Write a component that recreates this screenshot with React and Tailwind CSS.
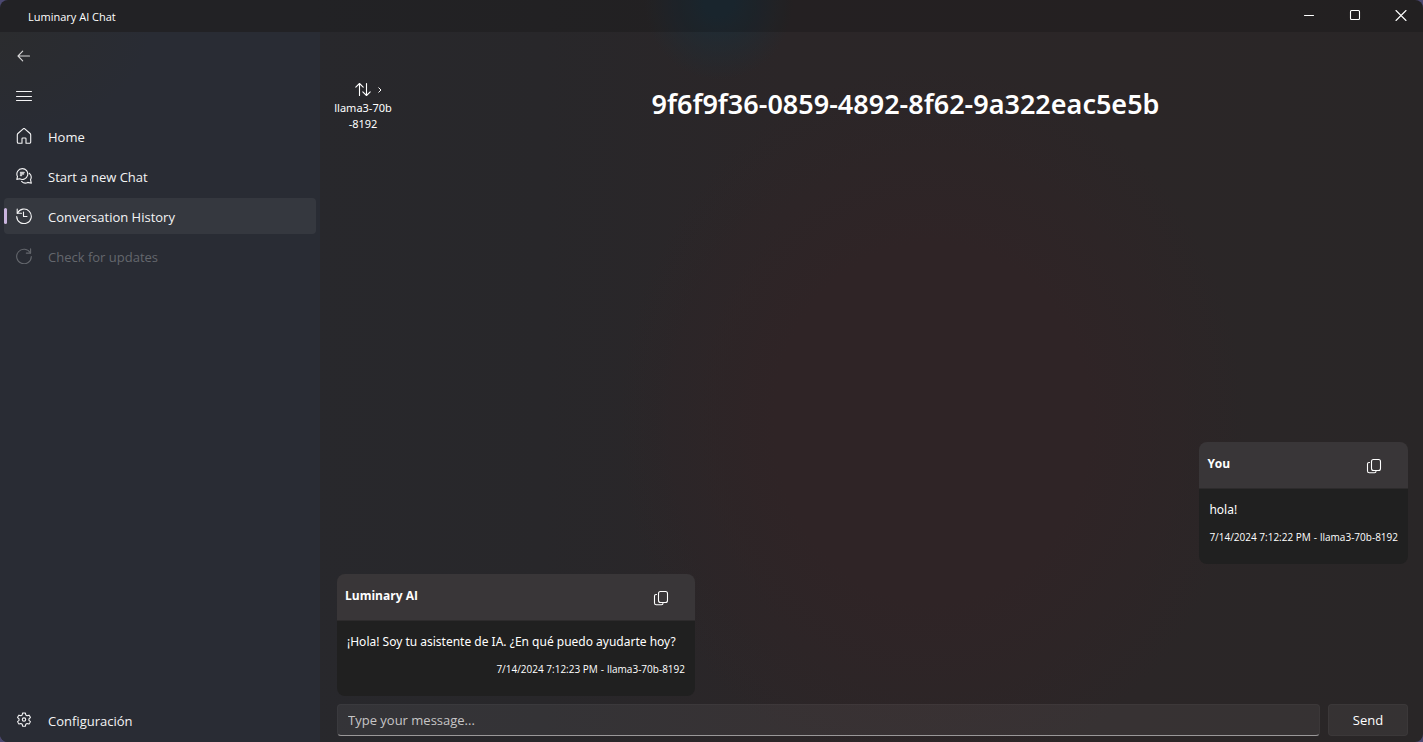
import React from "react";

function Icon({ children, className = "size-4" }) {
  return (
    <svg
      viewBox="0 0 16 16"
      className={`${className} shrink-0`}
      fill="none"
      stroke="currentColor"
      strokeWidth="1.1"
      strokeLinecap="round"
      strokeLinejoin="round"
      aria-hidden="true"
    >
      {children}
    </svg>
  );
}

const icons = {
  back: <path d="M13.5 8H2.2M6.7 3.2 2 8l4.7 4.8" opacity=".85" />,
  menu: <path d="M.5 3.5h15M.5 8.5h15M.5 12.5h15" strokeWidth="1" />,
  home: <path d="M6 15.2H2.6a1.3 1.3 0 0 1-1.3-1.3V7c0-.6.2-1.1.6-1.5L7.2.8a1.2 1.2 0 0 1 1.6 0l5.3 4.7c.4.4.6.9.6 1.5v6.9a1.3 1.3 0 0 1-1.3 1.3H10v-4.4a.8.8 0 0 0-.8-.8H6.8a.8.8 0 0 0-.8.8z" />,
  chat: (
    <>
      <path d="M6.3.6a5.4 5.4 0 1 1-2.6 10.1L.8 11.4l.7-2.9A5.4 5.4 0 0 1 6.3.6z" />
      <path d="M13.2 5.3a5.1 5.1 0 0 1 1.3 6.4l.8 3.5-3.5-.8a5.2 5.2 0 0 1-6.2-1.1" />
      <path d="M4.5 4.5h3.6M4.5 6h3M4.5 7.5h1" strokeWidth="1.5" opacity=".8" />
    </>
  ),
  history: (
    <>
      <path d="M1.2 1v4.3h4.3" />
      <path d="M1.4 5.2A7.3 7.3 0 1 1 .7 8.5" />
      <path d="M7.5 4v4.5H11" />
    </>
  ),
  refresh: (
    <>
      <path d="M14.6.8v4.3h-4.3" />
      <path d="M14.4 5A7.3 7.3 0 1 0 15.3 8.5" />
    </>
  ),
  settings: (
    <>
      <path d="M6.6 1.1a7.3 7.3 0 0 1 2.8 0l.4 1.9 1.3.75 1.9-.6a7.3 7.3 0 0 1 1.4 2.4l-1.45 1.3v1.5l1.45 1.3a7.3 7.3 0 0 1-1.4 2.4l-1.9-.6-1.3.75-.4 1.9a7.3 7.3 0 0 1-2.8 0l-.4-1.9-1.3-.75-1.9.6a7.3 7.3 0 0 1-1.4-2.4l1.45-1.3v-1.5L1.6 5.55A7.3 7.3 0 0 1 3 3.15l1.9.6L6.2 3z" />
      <circle cx="8" cy="7.6" r="1.7" />
    </>
  ),
  swap: <path d="M4.5 13.5v-12M.8 5.2l3.7-3.7 3.7 3.7M11.5 1.5v12M7.8 9.8l3.7 3.7 3.7-3.7" />,
  copy: (
    <>
      <rect x="5.5" y="1.5" width="9" height="11" rx="2" />
      <path d="M3.5 4.5H3A1.5 1.5 0 0 0 1.5 6v7a1.8 1.8 0 0 0 1.8 1.8h5.2a1.5 1.5 0 0 0 1.5-1.5" />
    </>
  ),
};

function NavItem({ icon, label, text, selected = false, disabled = false }) {
  return (
    <button
      type="button"
      aria-label={label}
      aria-current={selected ? "page" : undefined}
      disabled={disabled}
      className={`relative flex h-9 items-center gap-4 rounded px-3 text-left text-[13px] leading-5 ${
        selected ? "bg-white/6" : ""
      } ${disabled ? "text-[#64676d]" : "text-[#f4f4f5]"} ${text ? "w-full" : "w-10"}`}
    >
      {selected && <span className="absolute left-0 h-4 w-[3px] rounded-full bg-[#c9b4dd]" />}
      <Icon>{icons[icon]}</Icon>
      {text && <span className="pt-0.5">{text}</span>}
    </button>
  );
}

function Message({ author, body, date, model, own = false }) {
  return (
    <article className={`overflow-hidden rounded-lg ${own ? "self-end" : "min-w-[358px] self-start"}`}>
      <header className="flex items-start justify-between border-b border-black/20 bg-[#393638] pb-3.5 pl-2 pr-6 pt-3">
        <h2 className="text-[12px] leading-5 font-bold">{author}</h2>
        <button type="button" aria-label="Copy message" className="mt-1 px-0.5">
          <Icon>{icons.copy}</Icon>
        </button>
      </header>
      <div className="bg-[#202020] px-2.5 pb-[19px] pt-3">
        <p className="font-['Noto_Sans',sans-serif] text-[12px] leading-[18px]">{body}</p>
        <p className="mt-2.5 flex justify-end gap-[3px] text-[10px] leading-4">
          <span>{date}</span>
          <span>-</span>
          <span>{model}</span>
        </p>
      </div>
    </article>
  );
}

const caption = "flex h-8 w-[46px] items-center justify-center pl-0.5";

export default function App() {
  return (
    <div className="bg-[#4b4870] font-['Open_Sans','Noto_Sans',sans-serif] text-white">
      <div className="flex min-h-screen flex-col overflow-hidden rounded-lg bg-[#29282b] bg-[radial-gradient(ellipse_75px_80px_at_50.500%_0px,#1e2c35_20%,transparent_100%),radial-gradient(ellipse_22%_48%_at_65.500%_57%,#2f2426_0%,#2f2426_50%,transparent_100%),linear-gradient(90deg,#28282c_22%,#28272a_38%,#2b2628_55%,#2b2627_80%,#292627_100%)]">
        <header className="flex h-8 items-center justify-between bg-black/15">
          <h1 className="pl-7 pt-0.5 text-[11px]">Luminary AI Chat</h1>
          <div className="flex">
            <button type="button" aria-label="Minimize" className={caption}>
              <Icon><path d="M3.5 7.5h9" /></Icon>
            </button>
            <button type="button" aria-label="Maximize" className={caption}>
              <Icon><rect x="3.5" y="2.5" width="9" height="9" rx="1" /></Icon>
            </button>
            <button type="button" aria-label="Close" className={caption}>
              <Icon><path d="m3 2.5 10 10m0-10-10 10" /></Icon>
            </button>
          </div>
        </header>

        <div className="flex grow">
          <nav className="flex w-80 shrink-0 flex-col gap-1 bg-[#292c34] bg-[radial-gradient(ellipse_150px_100px_at_0px_0px,#2b2c2e,transparent)] px-1 pb-1 pt-1.5">
            <NavItem icon="back" label="Back" />
            <NavItem icon="menu" label="Toggle navigation" />
            <NavItem icon="home" text="Home" />
            <NavItem icon="chat" text="Start a new Chat" />
            <NavItem icon="history" text="Conversation History" selected />
            <NavItem icon="refresh" text="Check for updates" disabled />
            <div className="mt-auto">
              <NavItem icon="settings" text="Configuración" />
            </div>
          </nav>

          <main className="flex min-w-0 grow flex-col pb-1.5 pl-[17px] pr-[15px]">
            <div className="flex items-start pt-12">
              <button
                type="button"
                className="-ml-1 flex w-[60px] flex-col items-center whitespace-nowrap font-['Noto_Sans',sans-serif] text-[11px] leading-4"
              >
                <span className="flex h-5 w-full items-center justify-center gap-1.5 pl-3">
                  <Icon>{icons.swap}</Icon>
                  <svg viewBox="0 0 6 8" className="h-2 w-1.5" fill="none" stroke="currentColor" aria-hidden="true">
                    <path d="M1.5 1.5 4 4 1.5 6.5" />
                  </svg>
                </span>
                <span>llama3-70b</span>
                <span>-8192</span>
              </button>
              <h2 className="grow pl-2.5 pt-1 text-center font-['Noto_Sans',sans-serif] text-[27px] leading-10 font-semibold">
                9f6f9f36-0859-4892-8f62-9a322eac5e5b
              </h2>
            </div>

            <section aria-label="Messages" className="mt-auto flex flex-col gap-2.5">
              <Message own author="You" body="hola!" date="7/14/2024 7:12:22 PM" model="llama3-70b-8192" />
              <Message
                author="Luminary AI"
                body="¡Hola! Soy tu asistente de IA. ¿En qué puedo ayudarte hoy?"
                date="7/14/2024 7:12:23 PM"
                model="llama3-70b-8192"
              />
            </section>

            <form className="mt-2 flex gap-2" onSubmit={(e) => e.preventDefault()}>
              <input
                type="text"
                aria-label="Message"
                placeholder="Type your message..."
                className="h-8 min-w-0 grow rounded border border-white/3 border-b-[#9a9899] bg-white/6 px-2.5 text-[13px] text-white outline-none placeholder:text-[#c6c5c6]"
              />
              <button type="submit" className="h-8 w-20 rounded border border-white/3 bg-white/6 pt-0.5 text-[13px]">
                Send
              </button>
            </form>
          </main>
        </div>
      </div>
    </div>
  );
}
